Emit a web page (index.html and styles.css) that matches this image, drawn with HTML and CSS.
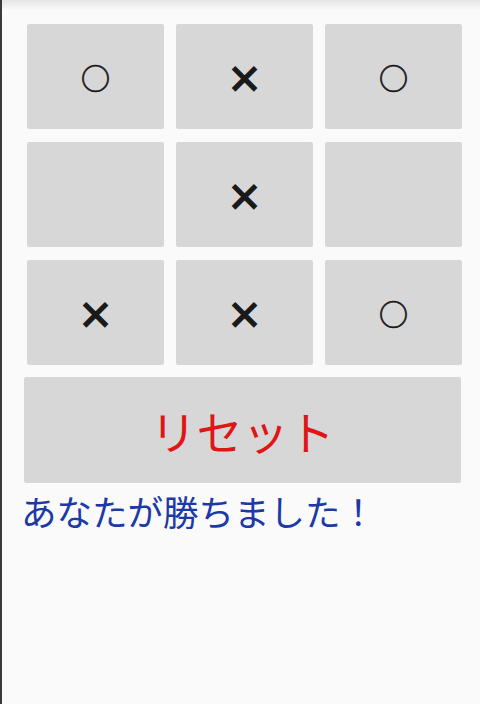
FILE: index.html
```html
<!DOCTYPE html>
<html lang="ja">
<head>
    <meta charset="UTF-8">
    <meta name="viewport" content="width=device-width, initial-scale=1.0">
    <title>三目並べ</title>
    <link rel="stylesheet" href="styles.css">
</head>
<body>
    <div class="screen">
        <div class="board">
            <button class="cell mark-o">○</button>
            <button class="cell mark-x">×</button>
            <button class="cell mark-o">○</button>
            <button class="cell"></button>
            <button class="cell mark-x">×</button>
            <button class="cell"></button>
            <button class="cell mark-x">×</button>
            <button class="cell mark-x">×</button>
            <button class="cell mark-o">○</button>
        </div>

        <button class="reset-button">リセット</button>

        <p class="result">あなたが勝ちました！</p>
    </div>
</body>
</html>
```

FILE: styles.css
```css
html, body {
    margin: 0;
    height: 100%;
}
body {
    background-color: #fafafa;
    font-family: "Noto Sans CJK JP", "Noto Sans", sans-serif;
}
.screen {
    box-sizing: border-box;
    height: 100%;
    border-left: 2px solid #3a3a3a;
    padding: 24px 19px 0 22px;
    background: linear-gradient(to bottom, #e4e4e4 0, #fafafa 10px);
}
.board {
    display: grid;
    grid-template-columns: repeat(3, 137px);
    grid-auto-rows: 105px;
    column-gap: 12px;
    row-gap: 13px;
    margin: 0 0 0 3px;
}
.cell {
    border: none;
    border-radius: 2px;
    background-color: #d7d7d7;
    color: #1a1a1a;
    font-family: inherit;
    padding: 0;
    cursor: pointer;
}
.cell.mark-o {
    font-size: 29px;
    -webkit-text-stroke: 0.7px #1a1a1a;
}
.cell.mark-x {
    font-size: 36px;
    font-weight: 700;
    -webkit-text-stroke: 1.4px #1a1a1a;
}
.reset-button {
    display: block;
    width: 437px;
    height: 106px;
    margin-top: 12px;
    border: none;
    border-radius: 2px;
    background-color: #d7d7d7;
    color: #e01515;
    font-family: inherit;
    font-size: 46px;
    cursor: pointer;
}
.result {
    margin: 8px 0 0 -3px;
    color: #1c3aa6;
    font-size: 35.5px;
    line-height: 40px;
}
```
